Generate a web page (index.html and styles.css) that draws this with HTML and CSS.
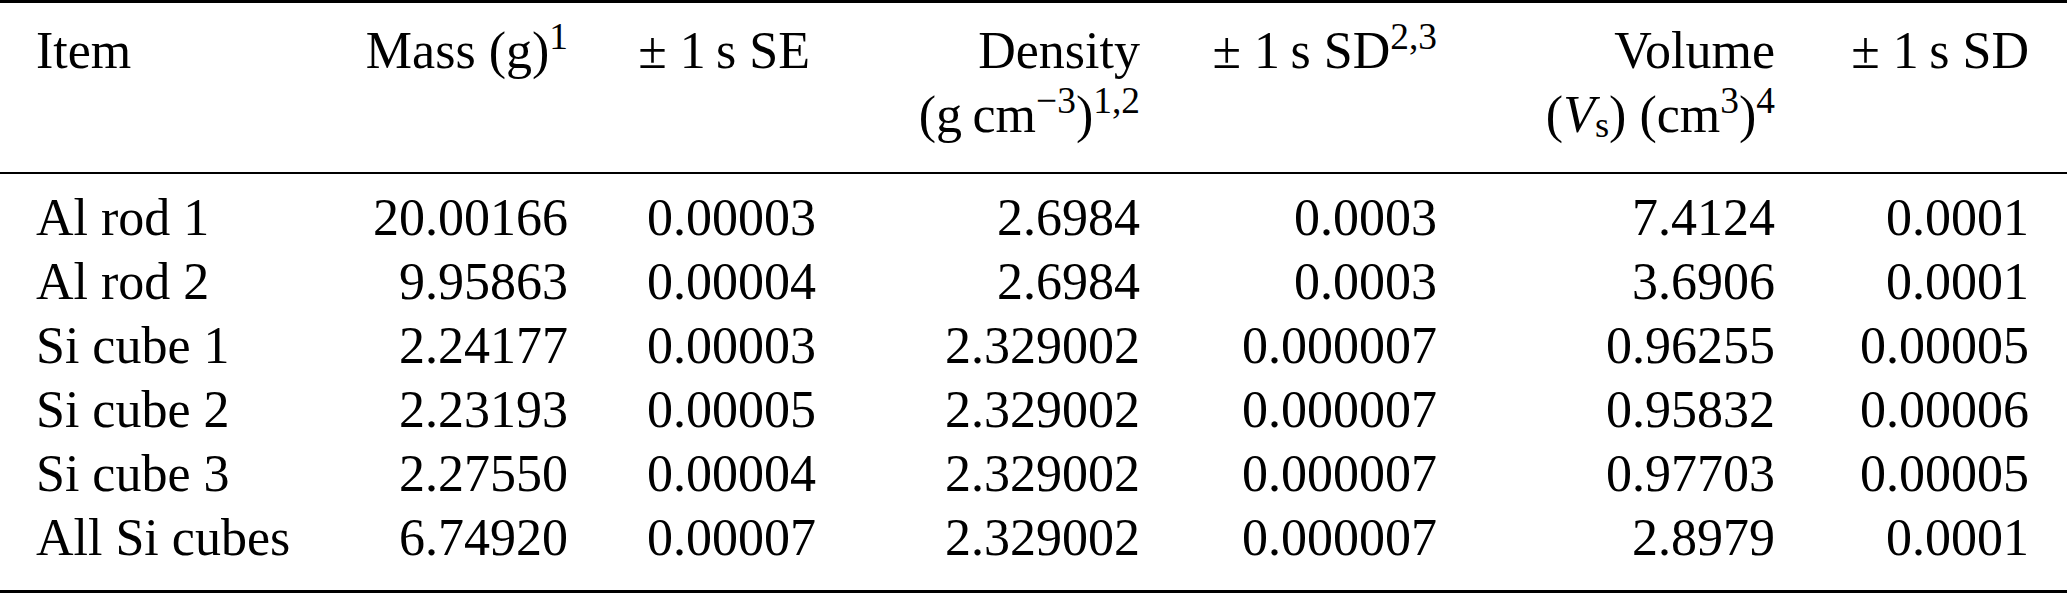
FILE: index.html
```html
<!DOCTYPE html>
<html lang="en">
<head>
<meta charset="utf-8">
<title>Table</title>
<link rel="stylesheet" href="styles.css">
</head>
<body>
<table class="data">
  <colgroup>
    <col class="c1"><col class="c2"><col class="c3"><col class="c4"><col class="c5"><col class="c6"><col class="c7">
  </colgroup>
  <thead>
    <tr>
      <th class="first">Item</th>
      <th>Mass (g)<sup>1</sup></th>
      <th class="se">± 1&#8201;s SE</th>
      <th>Density<br>(g&#8201;cm<sup>−3</sup>)<sup>1,2</sup></th>
      <th>± 1&#8201;s SD<sup>2,3</sup></th>
      <th>Volume<br>(<i>V</i><sub>s</sub>) (cm<sup>3</sup>)<sup>4</sup></th>
      <th class="last">± 1&#8201;s SD</th>
    </tr>
  </thead>
  <tbody>
    <tr><td class="first">Al rod 1</td><td>20.00166</td><td>0.00003</td><td>2.6984</td><td>0.0003</td><td>7.4124</td><td class="last">0.0001</td></tr>
    <tr><td class="first">Al rod 2</td><td>9.95863</td><td>0.00004</td><td>2.6984</td><td>0.0003</td><td>3.6906</td><td class="last">0.0001</td></tr>
    <tr><td class="first">Si cube 1</td><td>2.24177</td><td>0.00003</td><td>2.329002</td><td>0.000007</td><td>0.96255</td><td class="last">0.00005</td></tr>
    <tr><td class="first">Si cube 2</td><td>2.23193</td><td>0.00005</td><td>2.329002</td><td>0.000007</td><td>0.95832</td><td class="last">0.00006</td></tr>
    <tr><td class="first">Si cube 3</td><td>2.27550</td><td>0.00004</td><td>2.329002</td><td>0.000007</td><td>0.97703</td><td class="last">0.00005</td></tr>
    <tr><td class="first">All Si cubes</td><td>6.74920</td><td>0.00007</td><td>2.329002</td><td>0.000007</td><td>2.8979</td><td class="last">0.0001</td></tr>
  </tbody>
</table>
</body>
</html>
```

FILE: styles.css
```css
html, body {
  margin: 0;
  padding: 0;
  background: #ffffff;
}

body {
  font-family: "Liberation Serif", "Times New Roman", serif;
  font-size: 52px;
  color: #000000;
}

.data {
  width: 2067px;
  table-layout: fixed;
  border-collapse: separate;
  border-spacing: 0;
}

.c1 { width: 300px; }
.c2 { width: 268px; }
.c3 { width: 248px; }
.c4 { width: 324px; }
.c5 { width: 297px; }
.c6 { width: 338px; }
.c7 { width: 292px; }

.data th,
.data td {
  padding: 0;
  text-align: right;
  font-weight: normal;
  line-height: 64px;
  white-space: nowrap;
  vertical-align: top;
}

.data th {
  border-top: 3px solid #000;
  border-bottom: 2px solid #000;
  padding-top: 15.5px;
  padding-bottom: 25.5px;
}

.data tbody tr:first-child td {
  padding-top: 11.5px;
}

.data tbody tr:last-child td {
  padding-bottom: 20.5px;
  border-bottom: 3px solid #000;
}

.data .first {
  text-align: left;
  padding-left: 36px;
}

.data .last {
  padding-right: 38px;
}

.data th.se {
  padding-right: 6px;
}

sup {
  font-size: 0.72em;
  line-height: 0;
  vertical-align: 0.5em;
}

sub {
  font-size: 0.7em;
  line-height: 0;
  vertical-align: -0.15em;
}
```
